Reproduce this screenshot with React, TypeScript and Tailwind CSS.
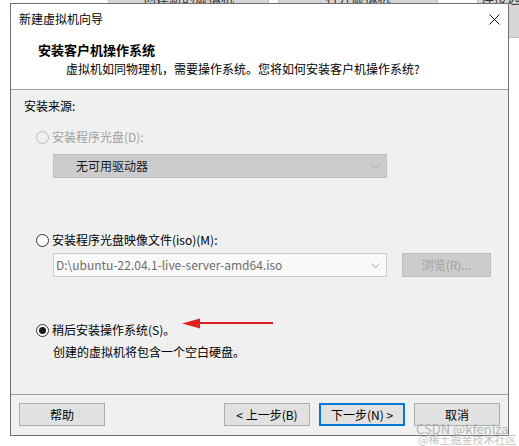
import React from "react";

function Radio({ checked, disabled }: { checked?: boolean; disabled?: boolean }) {
  return (
    <span
      className={
        "relative inline-flex h-[13px] w-[13px] shrink-0 items-center justify-center rounded-full border " +
        (disabled ? "border-[#bcbcbc] bg-[#f0f0f0]" : "border-[#333333] bg-white")
      }
    >
      {checked && <span className="h-[7px] w-[7px] rounded-full bg-[#1a1a1a]" />}
    </span>
  );
}

function Chevron({ color }: { color: string }) {
  return (
    <svg width="9" height="5" viewBox="0 0 9 5" className="shrink-0">
      <path d="M0.5 0.5 L4.5 4.5 L8.5 0.5" fill="none" stroke={color} strokeWidth="1" />
    </svg>
  );
}

function Btn({ children, primary }: { children: React.ReactNode; primary?: boolean }) {
  return (
    <div
      className={
        "flex h-[23px] w-[86px] items-center justify-center bg-[#e1e1e1] text-[12px] leading-none text-black " +
        (primary ? "border-2 border-[#0078d7]" : "border border-[#adadad]")
      }
    >
      {children}
    </div>
  );
}

export default function App() {
  return (
    <div className="relative h-[446px] w-[519px] overflow-hidden bg-white font-['Noto_Sans_CJK_SC',sans-serif] text-[12px] text-black">
      {/* background window buttons */}
      <div className="absolute left-[108px] top-[-30px] flex h-[68px] w-[161px] justify-center border border-[#bdbdbd] bg-[#d6d6d6] pt-[19px] text-[13px] leading-[16px] text-[#333]">
        创建新的虚拟机
      </div>
      <div className="absolute left-[278px] top-[-30px] flex h-[68px] w-[160px] justify-center border border-[#bdbdbd] bg-[#d6d6d6] pt-[19px] text-[13px] leading-[16px] text-[#333]">
        打开虚拟机
      </div>
      <div className="absolute left-[477px] top-[-30px] flex h-[68px] w-[160px] border border-[#bdbdbd] bg-[#d6d6d6] pl-[3px] pt-[19px] text-[13px] leading-[16px] text-[#333]">
        连接远程服务器
      </div>

      {/* dialog window */}
      <div className="absolute left-[10px] top-[3px] flex h-[433px] w-[499px] flex-col border border-[#707070] bg-white">
        {/* title bar */}
        <div className="flex h-[30px] shrink-0 items-center justify-between pl-[8px]">
          <span className="leading-[18px]">新建虚拟机向导</span>
          <div className="flex h-[30px] w-[28px] items-center justify-center">
            <svg width="11" height="11" viewBox="0 0 11 11">
              <path d="M0.5 0.5 L10.5 10.5 M10.5 0.5 L0.5 10.5" stroke="#111" strokeWidth="1" />
            </svg>
          </div>
        </div>

        {/* header */}
        <div className="flex h-[56px] shrink-0 flex-col border-b border-[#a0a0a0]">
          <div className="mt-[7px] pl-[27px] text-[13px] font-bold leading-[18px]">安装客户机操作系统</div>
          <div className="mt-[1px] pl-[55px] leading-[18px]">
            虚拟机如同物理机，需要操作系统。您将如何安装客户机操作系统?
          </div>
        </div>

        {/* body */}
        <div className="relative flex h-[305px] shrink-0 flex-col border-b border-[#a0a0a0] bg-[#f0f0f0] px-[13px]">
          <div className="mt-[7px] leading-[18px]">安装来源:</div>

          <div className="mt-[13px] flex h-[18px] items-center gap-[3px] pl-[12px] text-[#a0a0a0]">
            <Radio disabled />
            <span className="leading-[18px]">安装程序光盘(D):</span>
          </div>

          <div className="ml-[29px] mt-[8px] flex h-[24px] w-[334px] items-center justify-between border border-[#bfbfbf] bg-[#cccccc] pl-[22px] pr-[6px]">
            <span className="leading-[18px] text-[#1a1a1a]">无可用驱动器</span>
            <Chevron color="#a8a8a8" />
          </div>

          <div className="mt-[53px] flex h-[18px] items-center gap-[3px] pl-[12px]">
            <Radio />
            <span className="leading-[18px]">安装程序光盘映像文件(iso)(M):</span>
          </div>

          <div className="ml-[29px] mt-[4px] flex items-center gap-[15px]">
            <div className="flex h-[24px] w-[334px] items-center justify-between border border-[#cccccc] bg-[#f9f9f9] pl-[2px] pr-[6px]">
              <span className="leading-[18px] text-[#6d6d6d]">D:\ubuntu-22.04.1-live-server-amd64.iso</span>
              <Chevron color="#a8a8a8" />
            </div>
            <div className="flex h-[24px] w-[89px] items-center justify-center border border-[#bfbfbf] bg-[#cccccc] text-[#a0a0a0]">
              <span className="leading-[18px]">浏览(R)...</span>
            </div>
          </div>

          <div className="mt-[44px] flex h-[18px] items-center gap-[3px] pl-[12px]">
            <Radio checked />
            <span className="leading-[18px]">稍后安装操作系统(S)。</span>
          </div>

          <div className="ml-[29px] mt-[4px] leading-[18px]">创建的虚拟机将包含一个空白硬盘。</div>

          {/* red annotation arrow */}
          <svg className="absolute left-[171px] top-[227px]" width="92" height="14" viewBox="0 0 92 14">
            <path d="M16 6 L91 6" stroke="#e02020" strokeWidth="2" />
            <path d="M0 6.5 L18 1.5 L18 11.5 Z" fill="#e02020" />
          </svg>
        </div>

        {/* footer */}
        <div className="flex flex-1 items-start justify-between bg-[#f0f0f0] pl-[8px] pr-[8px] pt-[8px]">
          <Btn>帮助</Btn>
          <div className="flex gap-[9px]">
            <Btn>&lt; 上一步(B)</Btn>
            <Btn primary>下一步(N) &gt;</Btn>
            <Btn>取消</Btn>
          </div>
        </div>
      </div>

      {/* watermark */}
      <div className="absolute left-[416px] top-[422px] text-[13px] leading-[13px] text-[#a9a9a9] opacity-80">
        CSDN @kfenlza
      </div>
      <div className="absolute left-[418px] top-[433px] text-[11px] leading-[12px] text-[#b5b5b5] opacity-80">
        @稀土掘金技术社区
      </div>
    </div>
  );
}
